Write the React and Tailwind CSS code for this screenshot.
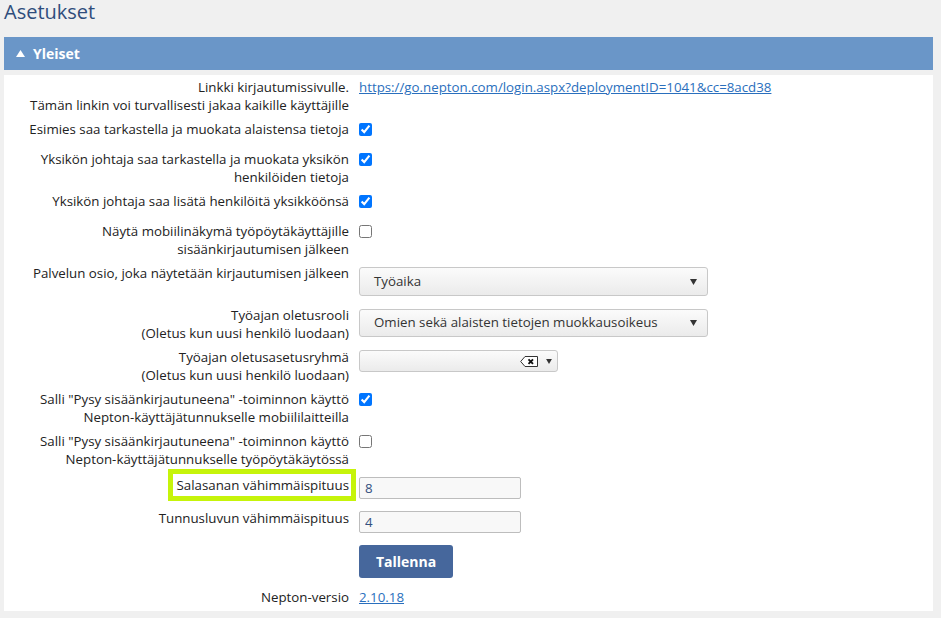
import React from 'react';

const font = { fontFamily: '"Open Sans", "Noto Sans", sans-serif' };

function Label({ lines, highlight }) {
  return (
    <div className="w-[345px] shrink-0 text-right leading-[18px] whitespace-nowrap">
      {highlight ? (
        <span className="relative inline-block">
          {lines[0]}
          <span className="absolute -left-[9px] -right-[7px] -top-[7px] -bottom-[7px] border-[5px] border-[#c6f40a]" />
        </span>
      ) : (
        lines.map((l, i) => (
          <div key={i}>{l}</div>
        ))
      )}
    </div>
  );
}

function Check({ checked }) {
  return (
    <div className="h-[18px] flex items-center">
      <input type="checkbox" defaultChecked={checked} className="m-0 w-[13px] h-[13px]" />
    </div>
  );
}

function Caret({ w = 7, h = 6 }) {
  return (
    <svg width={w} height={h} viewBox="0 0 7 6" className="shrink-0">
      <polygon points="0,0 7,0 3.5,6" fill="#333" />
    </svg>
  );
}

function FakeSelect({ value, top }) {
  return (
    <div
      className={`w-[349px] ${top} flex items-center justify-between pl-[14px] pr-[10px] border border-[#c8c8c8] rounded-[3px] bg-gradient-to-b from-[#fbfbfb] to-[#ebebeb] text-[#333]`}
    >
      <span>{value}</span>
      <Caret />
    </div>
  );
}

function Row({ label, highlight, children, min = 'min-h-[24px]', pt = 'pt-[3px]' }) {
  return (
    <div className={`flex ${pt} pb-[3px]`}>
      <div className={`flex ${min}`}>
        <Label lines={label} highlight={highlight} />
      </div>
      <div className="pl-[10px]">{children}</div>
    </div>
  );
}

export default function App() {
  return (
    <div className="min-h-screen bg-[#f0f0f0] text-[13.3px] text-[#222] pb-[6px]" style={font}>
      <h1 className="pl-[4px] text-[20px] leading-[24px] text-[#2f4d7c]">Asetukset</h1>

      <div className="ml-[4px] w-[929px] mt-[13px]">
        <div className="h-[33px] bg-[#6a96c8] flex items-center pl-[12px] gap-[8px] text-white font-bold text-[14px]">
          <svg width="9" height="7" viewBox="0 0 9 7">
            <polygon points="4.5,0 9,7 0,7" fill="#fff" />
          </svg>
          <span>Yleiset</span>
        </div>

        <div className="mt-[5px] bg-white pb-[2px]">
          <Row label={['Linkki kirjautumissivulle.', 'Tämän linkin voi turvallisesti jakaa kaikille käyttäjille']}>
            <a href="#" className="underline text-[#2a6fbd] leading-[18px] block">
              https://go.nepton.com/login.aspx?deploymentID=1041&amp;cc=8acd38
            </a>
          </Row>
          <Row label={['Esimies saa tarkastella ja muokata alaistensa tietoja']}>
            <Check checked />
          </Row>
          <Row label={['Yksikön johtaja saa tarkastella ja muokata yksikön', 'henkilöiden tietoja']}>
            <Check checked />
          </Row>
          <Row label={['Yksikön johtaja saa lisätä henkilöitä yksikköönsä']}>
            <Check checked />
          </Row>
          <Row label={['Näytä mobiilinäkymä työpöytäkäyttäjille', 'sisäänkirjautumisen jälkeen']}>
            <Check />
          </Row>
          <Row label={['Palvelun osio, joka näytetään kirjautumisen jälkeen']} min="min-h-[36px]">
            <div className="pt-[3px]">
              <FakeSelect value="Työaika" top="h-[29px]" />
            </div>
          </Row>
          <Row label={['Työajan oletusrooli', '(Oletus kun uusi henkilö luodaan)']}>
            <div className="pt-[3px]">
              <FakeSelect value="Omien sekä alaisten tietojen muokkausoikeus" top="h-[28px]" />
            </div>
          </Row>
          <Row label={['Työajan oletusasetusryhmä', '(Oletus kun uusi henkilö luodaan)']}>
            <div className="pt-[2px]">
              <div className="w-[199px] h-[22px] flex items-center justify-end gap-[8px] pr-[5px] border border-[#c8c8c8] rounded-[3px] bg-gradient-to-b from-[#fbfbfb] to-[#ebebeb]">
                <svg width="18" height="11" viewBox="0 0 18 11">
                  <path d="M5 0.5 H17.5 V10.5 H5 L0.7 5.5 Z" fill="#fff" stroke="#333" strokeWidth="1" />
                  <path d="M8.5 3.3 L13 7.8 M13 3.3 L8.5 7.8" stroke="#111" strokeWidth="1.9" />
                </svg>
                <Caret w={6} h={5} />
              </div>
            </div>
          </Row>
          <Row label={['Salli "Pysy sisäänkirjautuneena" -toiminnon käyttö', 'Nepton-käyttäjätunnukselle mobiililaitteilla']}>
            <Check checked />
          </Row>
          <Row label={['Salli "Pysy sisäänkirjautuneena" -toiminnon käyttö', 'Nepton-käyttäjätunnukselle työpöytäkäytössä']}>
            <Check />
          </Row>
          <Row label={['Salasanan vähimmäispituus']} highlight pt="pt-[5px]" min="min-h-[25px]">
            <input
              defaultValue="8"
              className="mt-[1px] w-[162px] h-[22px] px-[5px] border border-[#bdbdbd] rounded-[2px] bg-[#f8f8f8] text-[#34507f] outline-none"
            />
          </Row>
          <Row label={['Tunnusluvun vähimmäispituus']} pt="pt-[5px]" min="min-h-[25px]">
            <input
              defaultValue="4"
              className="mt-[2px] w-[162px] h-[22px] px-[5px] border border-[#bdbdbd] rounded-[2px] bg-[#f8f8f8] text-[#34507f] outline-none"
            />
          </Row>
          <div className="flex pt-[8px] pb-[7px]">
            <div className="w-[345px] shrink-0" />
            <div className="pl-[10px]">
              <button className="w-[94px] h-[33px] rounded-[3px] bg-[#46679c] text-white font-bold text-[14px]">
                Tallenna
              </button>
            </div>
          </div>
          <Row label={['Nepton-versio']} min="min-h-[18px]">
            <a href="#" className="underline text-[#2a6fbd] leading-[18px] block">2.10.18</a>
          </Row>
        </div>
      </div>
    </div>
  );
}
